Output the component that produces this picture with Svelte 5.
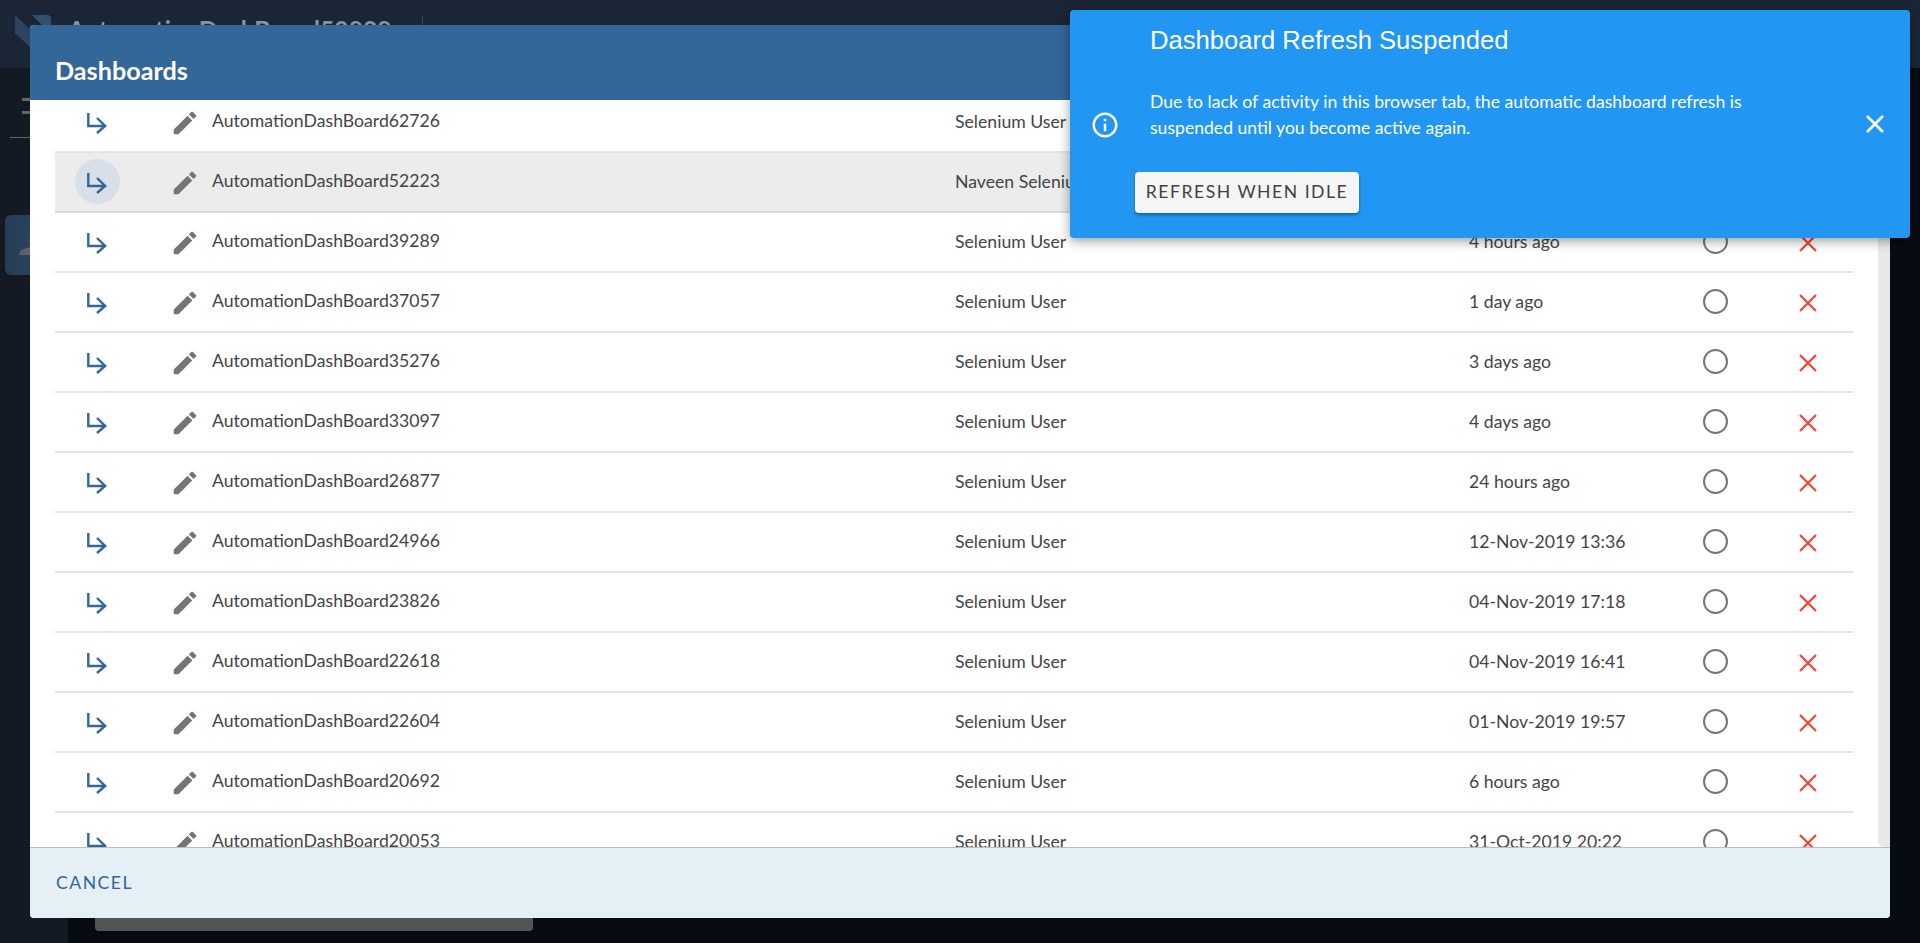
<script>
  const rows = [
    ['AutomationDashBoard62726', 'Selenium User', ''],
    ['AutomationDashBoard52223', 'Naveen Selenium User', ''],
    ['AutomationDashBoard39289', 'Selenium User', '4 hours ago'],
    ['AutomationDashBoard37057', 'Selenium User', '1 day ago'],
    ['AutomationDashBoard35276', 'Selenium User', '3 days ago'],
    ['AutomationDashBoard33097', 'Selenium User', '4 days ago'],
    ['AutomationDashBoard26877', 'Selenium User', '24 hours ago'],
    ['AutomationDashBoard24966', 'Selenium User', '12-Nov-2019 13:36'],
    ['AutomationDashBoard23826', 'Selenium User', '04-Nov-2019 17:18'],
    ['AutomationDashBoard22618', 'Selenium User', '04-Nov-2019 16:41'],
    ['AutomationDashBoard22604', 'Selenium User', '01-Nov-2019 19:57'],
    ['AutomationDashBoard20692', 'Selenium User', '6 hours ago'],
    ['AutomationDashBoard20053', 'Selenium User', '31-Oct-2019 20:22']
  ];
  const sideIcons = [
    'M14 2L24 12H20V22H14Z',
    'M14 9.5a4.5 4.5 0 1 1 0 9a4.5 4.5 0 1 1 0-9zM-1 28c0-5 7-8 15-8s15 3 15 8z',
    'M18 4H24V27H18A3 3 0 0 1 15 24V7A3 3 0 0 1 18 4Z',
    'M24 4L22 12L16 18L24 14V4M8 22L20 10',
    'M20 4H24V26H20ZM14 12H16V30H24V33H16A2 2 0 0 1 14 31Z',
    'M18 6H24V9H18V26H24V29H18A3 3 0 0 1 15 26V9A3 3 0 0 1 18 6Z',
    'M22 6H26V9H23V26H26V29H22A2 2 0 0 1 20 27V8A2 2 0 0 1 22 6Z',
    'M21 6H26V9H22V27H26V31H21A3 3 0 0 1 18 28V9A3 3 0 0 1 21 6Z'
  ];
</script>

<div class="page">
  <div class="topbar">
    <svg class="logo" viewBox="0 0 40 40" width="40" height="40">
      <path d="M1 0L18 16V34L1 18Z" fill="#2b4461"/>
      <path d="M18 0H33a4 4 0 0 1 4 4V20L30 12Z" fill="#34506f"/>
    </svg>
    <span class="app-title">AutomationDashBoard50828</span>
    <span class="divider"></span>
  </div>
  <div class="side">
    <div class="menu-bars"></div>
    <div class="side-rule"></div>
    <div class="side-list">
      {#each sideIcons as d, i}
        <div class="side-item" class:active={i === 1}>
          <svg viewBox="0 0 30 36" width="30" height="36"><path d={d} fill="#5e6164"/></svg>
        </div>
      {/each}
    </div>
  </div>
  <div class="under-panel"></div>

  <div class="overlay-pad">
    <section class="modal">
      <header class="modal-head">Dashboards</header>
      <div class="modal-body">
        <div class="list">
          {#each rows as r, i}
            <div class="row" class:hover={i === 1}>
              <div class="c-go">
                <span class="go" class:on={i === 1}>
                  <svg viewBox="0 0 24 24" width="24" height="24"><path d="M2.3 3V16H19M11 8l8.2 8-8.2 7" fill="none" stroke="#336699" stroke-width="2.4"/></svg>
                </span>
              </div>
              <div class="c-edit">
                <svg viewBox="0 0 24 24" width="30" height="30"><path fill="#757575" d="M3 17.25V21h3.75L17.81 9.94l-3.75-3.75L3 17.25zM20.71 7.04c.39-.39.39-1.02 0-1.41l-2.34-2.34c-.39-.39-1.02-.39-1.41 0l-1.83 1.83 3.75 3.75 1.83-1.83z"/></svg>
              </div>
              <div class="c-name">{r[0]}</div>
              <div class="c-owner">{r[1]}</div>
              <div class="c-time">{r[2]}</div>
              <div class="c-radio"><span class="radio"></span></div>
              <div class="c-del">
                <svg viewBox="0 0 20 20" width="20" height="20"><path d="M2 2l16 16M18 2L2 18" stroke="#f44336" stroke-width="2.2" fill="none"/></svg>
              </div>
            </div>
          {/each}
        </div>
        <div class="scrolltrack"></div>
      </div>
      <footer class="modal-foot"><span class="cancel">CANCEL</span></footer>
    </section>
  </div>

  <aside class="toast">
    <div class="toast-main">
      <svg class="toast-info" viewBox="0 0 24 24" width="30" height="30"><path fill="#fff" d="M11 7h2v2h-2zm0 4h2v6h-2zm1-9C6.48 2 2 6.48 2 12s4.48 10 10 10 10-4.48 10-10S17.52 2 12 2zm0 18c-4.41 0-8-3.59-8-8s3.59-8 8-8 8 3.59 8 8-3.59 8-8 8z"/></svg>
      <div class="toast-text">
        <h2>Dashboard Refresh Suspended</h2>
        <p>Due to lack of activity in this browser tab, the automatic dashboard refresh is suspended until you become active again.</p>
      </div>
      <svg class="toast-close" viewBox="0 0 20 20" width="20" height="20"><path d="M2 2l16 16M18 2L2 18" stroke="#fff" stroke-width="2.6" fill="none"/></svg>
    </div>
    <button class="idle">REFRESH WHEN IDLE</button>
  </aside>
</div>

<style>
  :global(body) { margin: 0; background: #080d14; font-family: Lato, "Liberation Sans", sans-serif; overflow: hidden; }
  .page { position: relative; width: 1920px; height: 943px; overflow: hidden; background: #070c13; }
  .topbar { height: 68px; background: #1a2635; color: #8b949d; font-size: 24.7px; font-weight: 700; padding: 15px 0 0 14px; box-sizing: border-box; display: flex; align-items: flex-start; }
  .logo { flex: none; }
  .app-title { margin-left: 14px; line-height: 30px; }
  .divider { width: 1px; height: 30px; margin: 1px 0 0 30px; background: #37424f; }
  .side { position: absolute; left: 0; top: 68px; bottom: 0; width: 68px; background: #131a24; }
  .menu-bars { position: absolute; left: 22px; top: 30px; width: 20px; height: 16px; border-top: 3px solid #666; border-bottom: 3px solid #666; box-sizing: border-box; }
  .side-rule { position: absolute; left: 10px; top: 69px; width: 48px; height: 1px; background: #666; }
  .side-list { position: absolute; left: 5px; top: 72px; display: flex; flex-direction: column; }
  .side-item { width: 60px; height: 70px; display: flex; align-items: center; padding-left: 15px; box-sizing: border-box; border-radius: 6px; }
  .side-item svg { overflow: visible; }
  .side-item.active { background: linear-gradient(90deg, #263d56, #2c4a69); height: 60px; margin: 5px 0; }
  .under-panel { position: absolute; left: 95px; top: 900px; width: 438px; height: 31px; background: #525558; border-radius: 0 0 4px 4px; }
  .overlay-pad { position: absolute; inset: 0; padding: 25px 30px; box-sizing: border-box; }
  .modal { height: 893px; display: flex; flex-direction: column; border-radius: 4px; overflow: hidden; background: #fff; }
  .modal-head { height: 75px; flex: none; background: #336699; color: #fff; font-size: 25.2px; font-weight: 700; padding: 0 25px; line-height: 90px; box-sizing: border-box; }
  .modal-body { flex: 1; min-height: 0; position: relative; overflow: hidden; padding: 0 25px; }
  .list { margin-top: -7px; width: 1798px; }
  .row { height: 60px; box-sizing: border-box; border-bottom: 2px solid #e3e3e3; display: flex; align-items: center; color: #444; font-size: 17.65px; }
  .row.hover { background: #ececec; border-bottom-color: #d9d9d9; }
  .row > div { padding-bottom: 1px; }
  .c-go { width: 42px; flex: none; }
  .go { width: 45px; height: 45px; margin-left: 20px; border-radius: 50%; display: flex; align-items: center; justify-content: center; }
  .go svg { overflow: visible; }
  .go.on { background: #d8dfe8; }
  .c-edit { width: 30px; flex: none; margin-left: 73px; }
  .c-edit svg { display: block; position: relative; top: 1px; }
  .c-name { width: 743px; flex: none; margin-left: 12px; position: relative; top: -1px; }
  .c-owner { width: 514px; flex: none; }
  .c-time { width: 234px; flex: none; }
  .c-radio { width: 95px; flex: none; }
  .radio { display: block; width: 25px; height: 25px; box-sizing: border-box; border: 2px solid #757575; border-radius: 50%; }
  .c-del svg { display: block; position: relative; top: 1px; }
  .scrolltrack { position: absolute; right: 0; top: 0; bottom: 0; width: 12px; background: #e8e8e8; border-radius: 0 0 0 6px; }
  .modal-foot { height: 71px; flex: none; box-sizing: border-box; border-top: 1px solid #b9bdbf; background: #e4eff6; padding: 24px 26px 0; }
  .cancel { color: #336699; font-size: 17.6px; letter-spacing: 1.5px; }
  .toast { position: absolute; left: 1070px; top: 10px; width: 840px; height: 228px; background: #2196f3; border-radius: 4px; box-shadow: 0 3px 12px rgba(0,0,0,.4); color: #fff; box-sizing: border-box; }
  .toast-main { position: relative; height: 161px; padding: 0 0 0 80px; }
  .toast-info { position: absolute; left: 20px; top: 100px; }
  .toast-close { position: absolute; right: 25px; top: 104px; }
  .toast-text h2 { margin: 0; padding-top: 15px; font: 400 25.6px/30px "Liberation Sans", Arial, sans-serif; }
  .toast-text p { margin: 34px 0 0; font-size: 17.6px; line-height: 26px; width: 640px; font-weight: 400; }
  .idle { position: absolute; left: 65px; top: 162px; width: 224px; height: 41px; border: 0; border-radius: 4px; background: #f5f5f5; color: #424242; font: 400 17.6px Lato, sans-serif; letter-spacing: 1.5px; box-shadow: 0 2px 3px rgba(0,0,0,.35); padding: 0 0 2px; }
</style>
